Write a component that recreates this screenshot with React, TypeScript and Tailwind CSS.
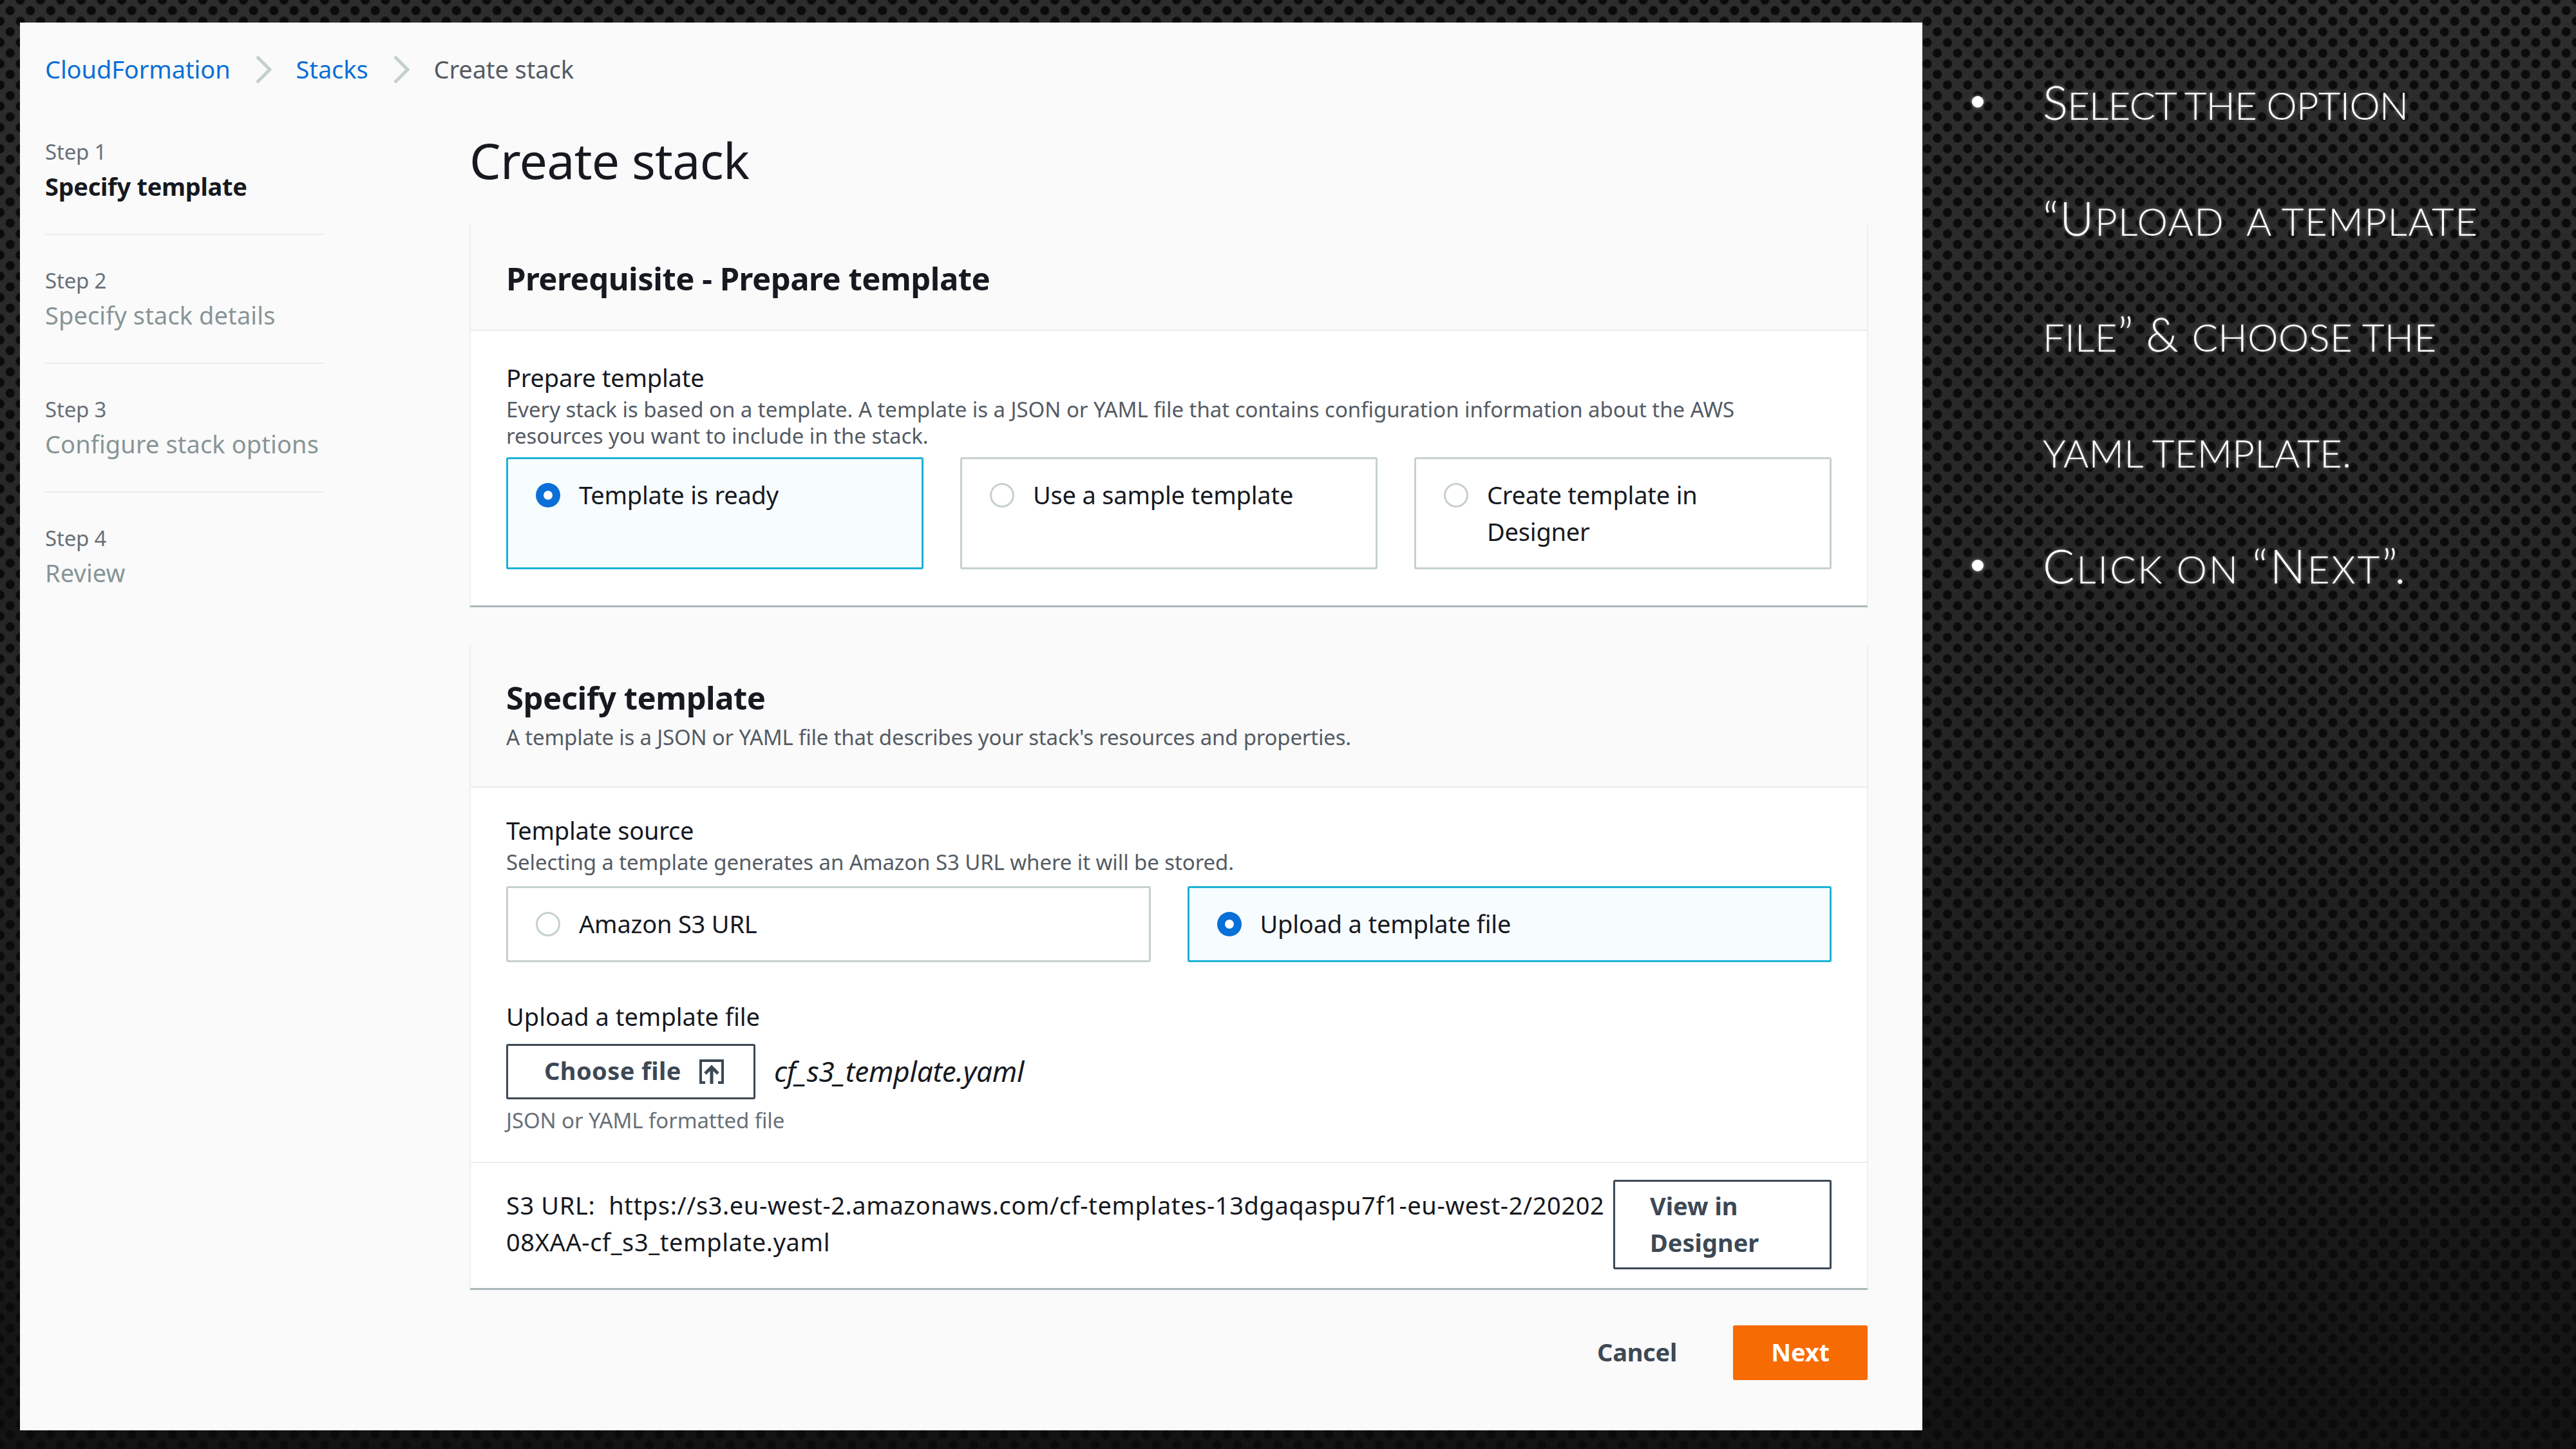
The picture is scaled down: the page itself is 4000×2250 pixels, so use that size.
import React from "react";

const font = "[font-family:'Noto_Sans',sans-serif]";

function Chevron() {
  return (
    <svg width="26" height="44" viewBox="0 0 26 44" className="mx-[38px] shrink-0">
      <path d="M3 2 L23 22 L3 42" fill="none" stroke="#c3cfcf" strokeWidth="5" />
    </svg>
  );
}

function Step({ n, name, active, last }: { n: number; name: string; active?: boolean; last?: boolean }) {
  return (
    <div className="w-[433px]">
      <div className="h-[41px] text-[33px] leading-[41px] text-[#687078] tracking-[-0.2px]">Step {n}</div>
      <div className={active ? "mt-[5px] h-[57px] text-[38px] leading-[57px] font-bold text-[#16191f] tracking-[-0.3px]" : "mt-[5px] h-[57px] text-[38px] leading-[57px] text-[#879596] tracking-[0.1px]"}>{name}</div>
      {!last && <div className="mt-[45px] mb-[50px] h-[2px] bg-[#eaeded]" />}
    </div>
  );
}

function Radio({ on }: { on?: boolean }) {
  return on ? (
    <span className="flex h-[38px] w-[38px] shrink-0 items-center justify-center rounded-full bg-[#0a6fd6]">
      <span className="h-[14px] w-[14px] rounded-full bg-white" />
    </span>
  ) : (
    <span className="h-[38px] w-[38px] shrink-0 rounded-full border-[3px] border-[#c6d0d0] bg-white" />
  );
}

function Tile({ on, label, h }: { on?: boolean; label: string; h: string }) {
  return (
    <div className={`flex items-start gap-[29px] rounded-[3px] border-[3px] pl-[43px] pr-[60px] ${h} ${on ? "border-[#1ab2d6] bg-[#f7fcff]" : "border-[#c6d0d0] bg-white"}`}>
      <span className="flex h-[57px] items-center"><Radio on={on} /></span>
      <span className="text-[38px] leading-[57px] text-[#16191f] tracking-[-0.2px]">{label}</span>
    </div>
  );
}

function Sc({ children }: { children: React.ReactNode }) {
  return <span className="text-[60px]">{children}</span>;
}

function Bullet({ children, dot, track }: { children: React.ReactNode; dot?: boolean; track: string }) {
  return (
    <div className={`relative h-[180px] text-[73px] leading-[180px] font-light uppercase text-white [font-family:Lato,sans-serif] [text-shadow:0_0_5px_rgba(255,255,255,0.45)] whitespace-pre ${track}`}>
      {dot && <span className="absolute left-[-110px] top-[81px] h-[18px] w-[18px] rounded-full bg-white [box-shadow:0_0_5px_rgba(255,255,255,0.6)]" />}
      {children}
    </div>
  );
}

function UploadIcon() {
  return (
    <svg width="38" height="38" viewBox="0 0 38 38" className="shrink-0">
      <path d="M2 38 V2 H36 V38" fill="none" stroke="#3c4855" strokeWidth="4" />
      <path d="M2 36 H9 M29 36 H36" fill="none" stroke="#3c4855" strokeWidth="4" />
      <path d="M19 38 V13 M9 22 L19 12 L29 22" fill="none" stroke="#3c4855" strokeWidth="5" />
    </svg>
  );
}

export default function App() {
  return (
    <div className={`flex h-[2250px] w-[4000px] overflow-hidden pl-[31px] pt-[35px] ${font} [background-image:radial-gradient(circle,#0b0b0b_6px,transparent_8px),radial-gradient(circle,#0b0b0b_6px,transparent_8px),linear-gradient(180deg,#2d2d2d_0%,#262626_45%,#131313_100%)] [background-size:31.5px_33px,31.5px_33px,100%_100%] [background-position:0_0,15.75px_16.5px,0_0]`}>
      <div className="h-[2186px] w-[2954px] shrink-0 bg-[#fafafa] pl-[39px] pt-[44px]">
        <div className="flex h-[57px] items-center text-[38px] tracking-[-0.1px]">
          <span className="text-[#0a6fd6]">CloudFormation</span>
          <Chevron />
          <span className="text-[#0a6fd6]">Stacks</span>
          <Chevron />
          <span className="text-[#545b64]">Create stack</span>
        </div>
        <div className="flex">
          <div className="w-[659px] shrink-0 pt-[79px]">
            <Step n={1} name="Specify template" active />
            <Step n={2} name="Specify stack details" />
            <Step n={3} name="Configure stack options" />
            <Step n={4} name="Review" last />
          </div>
          <div className="w-[2172px]">
            <h1 className="mt-[63px] mb-[50px] h-[100px] text-[77px] leading-[100px] font-normal text-[#16191f] tracking-[-0.7px]">Create stack</h1>

            <section className="h-[594px] border-x-2 border-b-[3px] border-x-[#eef0f0] border-b-[#aab7b8] bg-white">
              <div className="flex h-[165px] items-center border-b-2 border-[#eaeded] bg-[#fafafa] pl-[55px] pt-[4px]">
                <h2 className="text-[49px] font-bold text-[#16191f] tracking-[-0.5px]">Prerequisite - Prepare template</h2>
              </div>
              <div className="px-[55px] pt-[44px]">
                <div className="h-[57px] text-[38px] leading-[57px] text-[#16191f] tracking-[-0.2px]">Prepare template</div>
                <p className="w-[2040px] text-[33px] leading-[41px] text-[#545b64] tracking-[-0.05px]">
                  Every stack is based on a template. A template is a JSON or YAML file that contains configuration information about the AWS resources you want to include in the stack.
                </p>
                <div className="mt-[13px] grid grid-cols-3 gap-[57px]">
                  <Tile on label="Template is ready" h="h-[174px] pt-[27px]" />
                  <Tile label="Use a sample template" h="h-[174px] pt-[27px]" />
                  <Tile label="Create template in Designer" h="h-[174px] pt-[27px]" />
                </div>
              </div>
            </section>

            <section className="mt-[58px] h-[1002px] border-x-2 border-b-[3px] border-x-[#eef0f0] border-b-[#aab7b8] bg-white">
              <div className="h-[222px] border-b-2 border-[#eaeded] bg-[#fafafa] pl-[55px] pt-[50px]">
                <h2 className="h-[64px] text-[49px] leading-[64px] font-bold text-[#16191f] tracking-[-0.5px]">Specify template</h2>
                <p className="mt-[9px] h-[41px] text-[33px] leading-[41px] text-[#545b64] tracking-[-0.2px]">A template is a JSON or YAML file that describes your stack's resources and properties.</p>
              </div>
              <div className="px-[55px] pt-[38px]">
                <div className="h-[57px] text-[38px] leading-[57px] text-[#16191f] tracking-[-0.2px]">Template source</div>
                <p className="h-[41px] text-[33px] leading-[41px] text-[#545b64] tracking-[-0.1px]">Selecting a template generates an Amazon S3 URL where it will be stored.</p>
                <div className="mt-[17px] grid grid-cols-2 gap-[57px]">
                  <Tile label="Amazon S3 URL" h="h-[118px] pt-[27px]" />
                  <Tile on label="Upload a template file" h="h-[118px] pt-[27px]" />
                </div>
                <div className="mt-[56px] h-[57px] text-[38px] leading-[57px] text-[#16191f] tracking-[0px]">Upload a template file</div>
                <div className="mt-[14px] flex items-center">
                  <div className="flex h-[86px] w-[387px] items-center gap-[28px] rounded-[3px] border-[3px] border-[#3c4855] bg-white pl-[56px]">
                    <span className="pb-[3px] text-[38px] font-bold text-[#3c4855] tracking-[0.4px]">Choose file</span>
                    <UploadIcon />
                  </div>
                  <span className="ml-[29px] pb-[3px] text-[44px] italic text-[#16191f] tracking-[-0.2px]">cf_s3_template.yaml</span>
                </div>
                <p className="mt-[12px] h-[41px] text-[33px] leading-[41px] text-[#687078] tracking-[-0.1px]">JSON or YAML formatted file</p>
              </div>
              <div className="mt-[44px] flex h-[196px] border-t-2 border-[#eaeded] px-[55px] pt-[26px]">
                <div className="w-[1719px] pt-[11px] text-[38px] leading-[57px] text-[#16191f] tracking-[0.6px] whitespace-nowrap">
                  S3 URL:&nbsp; https://s3.eu-west-2.amazonaws.com/cf-templates-13dgaqaspu7f1-eu-west-2/20202<br />08XAA-cf_s3_template.yaml
                </div>
                <div className="h-[139px] w-[339px] rounded-[3px] border-[3px] border-[#3c4855] bg-white pl-[54px] pt-[9px] text-[38px] leading-[57px] font-bold text-[#3c4855] tracking-[0px]">
                  View in<br />Designer
                </div>
              </div>
            </section>

            <div className="mt-[55px] flex w-[2171px] items-center justify-end">
              <span className="mr-[87px] pb-[3px] text-[38px] font-bold text-[#3c4855] tracking-[-0.25px]">Cancel</span>
              <div className="flex h-[85px] w-[209px] items-center justify-center rounded-[3px] bg-[#f76b05] pb-[3px] text-[38px] font-bold text-white tracking-[-0.25px]">Next</div>
            </div>
          </div>
        </div>
      </div>

      <div className="ml-[187px] pt-[33px]">
        <Bullet dot track="tracking-[-0.9px]">S<Sc>elect the option</Sc></Bullet>
        <Bullet track="tracking-[1.5px]">“U<Sc>pload  a template</Sc></Bullet>
        <Bullet track="tracking-[0.3px]"><Sc>file</Sc>” &amp; <Sc>choose the</Sc></Bullet>
        <Bullet track="tracking-[0.2px]"><Sc>yaml template.</Sc></Bullet>
        <Bullet dot track="tracking-[2.85px]">C<Sc>lick on </Sc>“N<Sc>ext</Sc>”.</Bullet>
      </div>
    </div>
  );
}
